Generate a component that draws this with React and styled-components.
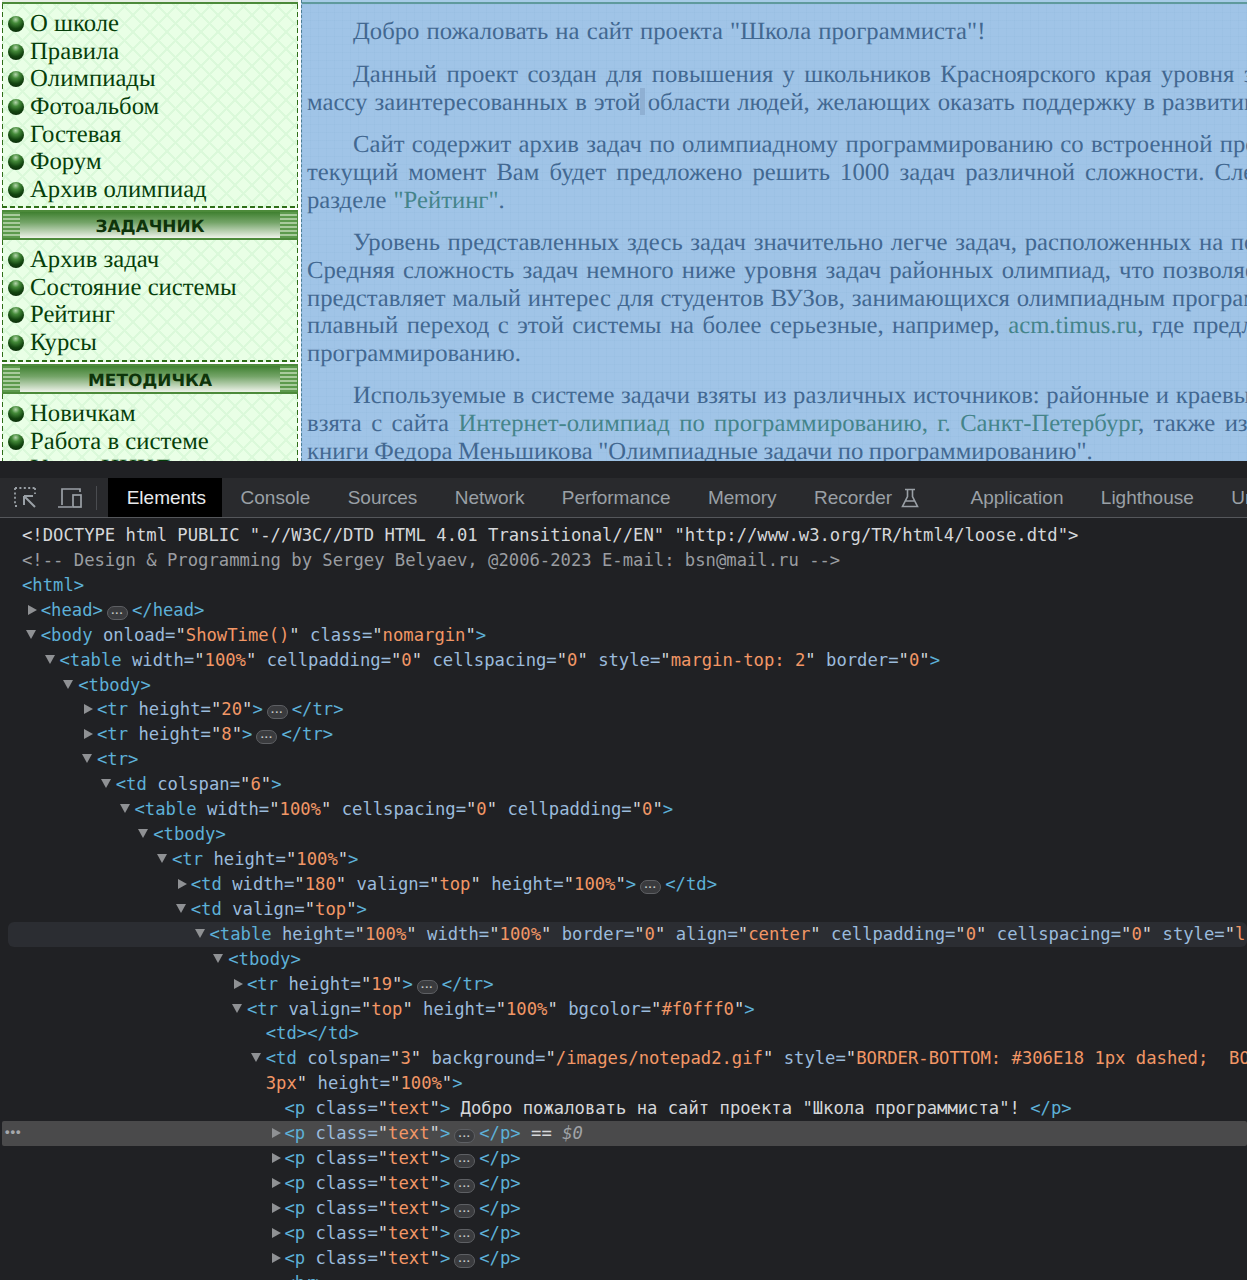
import React from "react";
import styled, { createGlobalStyle } from "styled-components";

const GlobalStyle = createGlobalStyle`
  html, body { margin: 0; padding: 0; background: #202124; overflow: hidden; }
`;

const Page = styled.div`
  width: 1247px;
  height: 1280px;
  overflow: hidden;
  display: flex;
  flex-direction: column;
  background: #202124;
`;

const Site = styled.div`
  height: 461px;
  flex: none;
  display: flex;
  overflow: hidden;
  background: #fff;
  font-family: "Liberation Serif", serif;
  text-rendering: geometricPrecision;
`;

const Sidebar = styled.aside`
  width: 296px;
  margin-left: 2px;
  flex: none;
  display: flex;
  flex-direction: column;
`;

const BannerEnd = styled.div`
  height: 4px;
  flex: none;
  background: linear-gradient(#e8efe6 0 2px, #4c8a3a 2px);
`;

const MenuBox = styled.ul`
  list-style: none;
  margin: 0;
  padding: 6.5px 0 5px 6px;
  height: ${(p) => p.$height}px;
  flex: none;
  box-sizing: border-box;
  background-color: #e9ffe6;
  background-image:
    repeating-linear-gradient(#2f6e18 0 5px, transparent 5px 8px),
    repeating-linear-gradient(#2f6e18 0 5px, transparent 5px 8px),
    repeating-linear-gradient(90deg, #2f6e18 0 5px, transparent 5px 8px),
    repeating-linear-gradient(45deg, #dbf9da 0 2px, transparent 2px 12px),
    repeating-linear-gradient(-45deg, #dbf9da 0 2px, transparent 2px 12px);
  background-size: 1px 100%, 1px 100%, 100% 2px, auto, auto;
  background-position: left top, right top, left bottom, 0 0, 0 0;
  background-repeat: no-repeat, no-repeat, no-repeat, repeat, repeat;
`;

const MenuItem = styled.li`
  display: flex;
  align-items: center;
  gap: 6px;
  height: 27.6px;
  font-size: 24.7px;
  color: #063f0a;
  white-space: nowrap;
`;

const Bullet = styled.span`
  width: 16px;
  height: 16px;
  flex: none;
  border-radius: 50%;
  background: radial-gradient(circle at 48% 22%, #b4d6ac 0, #448a39 26%, #134510 60%, #061f05 100%);
`;

const Banner = styled.div`
  height: 30px;
  margin-top: 2px;
  flex: none;
  box-sizing: border-box;
  border: 1px solid #4c8a3a;
  border-width: 2px 1px;
  display: flex;
  background: linear-gradient(#3f8030, #74a468 40%, #eef3ea 100%);
`;

const BannerStripes = styled.div`
  width: 17px;
  flex: none;
  background: repeating-linear-gradient(#5c9a4c 0 2px, #a8cb9c 2px 4px);
`;

const BannerTitle = styled.div`
  flex: 1;
  text-align: center;
  font: bold 16.9px/29px "DejaVu Sans", sans-serif;
  color: #0e340a;
`;

const Article = styled.main`
  position: relative;
  flex: 1;
  min-width: 0;
  margin-left: 3px;
  overflow: hidden;
  border-left: 1px dashed #4d7f96;
  box-sizing: border-box;
  background-color: #a0c4e7;
  background-image:
    repeating-linear-gradient(90deg, rgba(120, 160, 200, 0.08) 0 1px, transparent 1px 8px),
    repeating-linear-gradient(0deg, rgba(120, 160, 200, 0.08) 0 1px, transparent 1px 8px);
`;

const ArticleTop = styled.div`
  height: 4px;
  margin-bottom: -1px;
  background: linear-gradient(#a6cbe6 0 2px, #5f9a9c 2px);
`;

const CursorMark = styled.span`
  position: absolute;
  left: 338px;
  top: 88px;
  width: 5px;
  height: 27px;
  background: rgba(130, 160, 195, 0.55);
`;

const Paragraph = styled.div`
  margin: 15.2px 0 15.2px 5px;
`;

const TextLine = styled.div`
  font-size: 24.7px;
  line-height: 27.6px;
  color: #426891;
  white-space: pre;
  text-indent: ${(p) => (p.$first ? "46px" : "0")};
  word-spacing: ${(p) => p.$spacing || 0}px;
`;

const SiteLink = styled.span`
  color: #44848a;
`;

const DevTools = styled.section`
  flex: 1;
  min-height: 0;
  padding-top: 17px;
  display: flex;
  flex-direction: column;
`;

const TabBar = styled.nav`
  height: 40px;
  flex: none;
  display: flex;
  align-items: stretch;
  background: #292a2d;
  border-bottom: 1px solid #55575b;
  box-sizing: border-box;
  overflow: hidden;
`;

const ToolIcons = styled.div`
  width: 108px;
  flex: none;
  display: flex;
  align-items: center;
  gap: 19px;
  padding-left: 14px;
  box-sizing: border-box;
  color: #9aa0a6;
`;

const ToolDivider = styled.div`
  width: 1px;
  height: 24px;
  margin-left: -6px;
  background: #4a4c50;
`;

const Tab = styled.div`
  display: flex;
  align-items: center;
  gap: 9px;
  flex: none;
  padding: 0 ${(p) => (p.$active ? "16px" : "18.7px")} 0 18.7px;
  font: 19px "Liberation Sans", sans-serif;
  color: ${(p) => (p.$active ? "#e8eaed" : "#9aa0a6")};
  background: ${(p) => (p.$active ? "#000" : "transparent")};
  svg {
    margin-right: 14px;
  }
`;

const Tree = styled.div`
  flex: 1;
  min-height: 0;
  padding-top: 5px;
  overflow: hidden;
  isolation: isolate;
`;

const Row = styled.div`
  position: relative;
  height: 24.93px;
  padding-left: ${(p) => 22 + p.$level * 18.75}px;
  font: 17.22px/24.93px "DejaVu Sans Mono", monospace;
  white-space: pre;
  color: #d5d7da;
  ${(p) =>
    (p.$selected || p.$hover) &&
    `&::before {
      content: "";
      position: absolute;
      z-index: -1;
      top: 0;
      bottom: 0;
      right: 0;
      left: ${p.$selected ? 2 : 8}px;
      background: ${p.$selected ? "#4a4a4b" : "#2b2d32"};
      border-radius: ${p.$selected ? "2px" : "6px"};
    }`}
`;

const Arrow = styled.span`
  position: absolute;
  top: 7px;
  left: ${(p) => (p.$open ? 7 : 9) + p.$level * 18.75}px;
  width: 0;
  height: 0;
  ${(p) =>
    p.$open
      ? "border-left: 5.5px solid transparent; border-right: 5.5px solid transparent; border-top: 9px solid #8f9194;"
      : "border-top: 5.5px solid transparent; border-bottom: 5.5px solid transparent; border-left: 9px solid #8f9194;"}
`;

const Tag = styled.span`color: #5db0d7;`;
const Attr = styled.span`color: #9bbbdc;`;
const Value = styled.span`color: #f29766;`;
const Comment = styled.span`color: #9a9da1;`;
const Current = styled.span`color: #a0a3a7; font-style: italic;`;

const Dots = styled.span`
  display: inline-block;
  width: 21px;
  height: 14px;
  margin: 0 4px;
  vertical-align: -1px;
  box-sizing: border-box;
  border: 1px solid #5e6064;
  border-radius: 7px;
  background: #3a3b3e;
  color: #c4c7c5;
  font: bold 11px/12px "Liberation Sans", sans-serif;
  letter-spacing: 0.5px;
  text-align: center;
`;

const RowMenu = styled.span`
  position: absolute;
  left: 5px;
  top: 0;
  font: bold 13px/22px "Liberation Sans", sans-serif;
  letter-spacing: 1px;
  color: #a6a8ab;
`;

const menus = {
  main: ["О школе", "Правила", "Олимпиады", "Фотоальбом", "Гостевая", "Форум", "Архив олимпиад"],
  tasks: ["Архив задач", "Состояние системы", "Рейтинг", "Курсы"],
  guide: ["Новичкам", "Работа в системе", "Уроки ЦИКЛ"],
};

function Menu({ items, height }) {
  return (
    <MenuBox $height={height}>
      {items.map((name) => (
        <MenuItem key={name}>
          <Bullet />
          {name}
        </MenuItem>
      ))}
    </MenuBox>
  );
}

function SideBanner({ title }) {
  return (
    <Banner>
      <BannerStripes />
      <BannerTitle>{title}</BannerTitle>
      <BannerStripes />
    </Banner>
  );
}

function A({ n, v }) {
  return (
    <>
      {" "}
      <Attr>{n}</Attr>
      <Attr>=</Attr>"<Value>{v}</Value>"
    </>
  );
}

function Collapsed({ open, close, attrs }) {
  return (
    <>
      <Tag>&lt;{open}</Tag>
      {attrs}
      <Tag>&gt;</Tag>
      <Dots>···</Dots>
      <Tag>&lt;/{close || open}&gt;</Tag>
    </>
  );
}

const TextP = () => (
  <Collapsed open="p" attrs={<A n="class" v="text" />} />
);

function App() {
  return (
    <Page>
      <GlobalStyle />
      <Site>
        <Sidebar>
          <BannerEnd />
          <Menu items={menus.main} height={204} />
          <SideBanner title="ЗАДАЧНИК" />
          <Menu items={menus.tasks} height={122} />
          <SideBanner title="МЕТОДИЧКА" />
          <Menu items={menus.guide} height={120} />
        </Sidebar>
        <Article>
          <ArticleTop />
          <CursorMark />
          <Paragraph>
            <TextLine $first $spacing={1}>Добро пожаловать на сайт проекта "Школа программиста"!</TextLine>
          </Paragraph>
          <Paragraph>
            <TextLine $first $spacing={3.2}>Данный проект создан для повышения у школьников Красноярского края уровня знаний</TextLine>
            <TextLine $spacing={0.9}>массу заинтересованных в этой области людей, желающих оказать поддержку в развитии</TextLine>
          </Paragraph>
          <Paragraph>
            <TextLine $first $spacing={1.1}>Сайт содержит архив задач по олимпиадному программированию со встроенной проверкой</TextLine>
            <TextLine $spacing={3.9}>текущий момент Вам будет предложено решить 1000 задач различной сложности. Следите</TextLine>
            <TextLine $spacing={0.9}>разделе <SiteLink>"Рейтинг"</SiteLink>.</TextLine>
          </Paragraph>
          <Paragraph>
            <TextLine $first $spacing={1.5}>Уровень представленных здесь задач значительно легче задач, расположенных на популярных</TextLine>
            <TextLine $spacing={2}>Средняя сложность задач немного ниже уровня задач районных олимпиад, что позволяет</TextLine>
            <TextLine $spacing={0.6}>представляет малый интерес для студентов ВУЗов, занимающихся олимпиадным программированием</TextLine>
            <TextLine $spacing={2.3}>плавный переход с этой системы на более серьезные, например, <SiteLink>acm.timus.ru</SiteLink>, где предлагается</TextLine>
            <TextLine>программированию.</TextLine>
          </Paragraph>
          <Paragraph>
            <TextLine $first $spacing={0.5}>Используемые в системе задачи взяты из различных источников: районные и краевые</TextLine>
            <TextLine $spacing={3.2}>взята с сайта <SiteLink>Интернет-олимпиад по программированию, г. Санкт-Петербург</SiteLink>, также из</TextLine>
            <TextLine $spacing={-0.7}>книги Федора Меньшикова "Олимпиадные задачи по программированию".</TextLine>
          </Paragraph>
        </Article>
      </Site>
      <DevTools>
        <TabBar>
          <ToolIcons>
            <svg width="24" height="24" viewBox="0 0 24 24" fill="none" stroke="currentColor" strokeWidth="1.8">
              <path d="M1 2h20M1 2v16M1 20h4M21 2v6" strokeDasharray="2 2.4" />
              <path d="M10 10h9M10 10v9M10 10l11 11" strokeWidth="2" />
            </svg>
            <svg width="26" height="22" viewBox="0 0 26 22" fill="none" stroke="currentColor" strokeWidth="1.7">
              <path d="M1 20h14M5 18V2h18v3" />
              <rect x="16" y="8" width="8" height="12" />
            </svg>
            <ToolDivider />
          </ToolIcons>
          <Tab $active>Elements</Tab>
          <Tab>Console</Tab>
          <Tab>Sources</Tab>
          <Tab>Network</Tab>
          <Tab>Performance</Tab>
          <Tab>Memory</Tab>
          <Tab>
            Recorder
            <svg width="18" height="20" viewBox="0 0 18 20" fill="none" stroke="currentColor" strokeWidth="1.6">
              <path d="M4 1.5h10M6.5 1.5v7L1.5 18.5h15L11.5 8.5v-7M4.5 13h9" />
            </svg>
          </Tab>
          <Tab>Application</Tab>
          <Tab>Lighthouse</Tab>
          <Tab>Ur</Tab>
        </TabBar>
        <Tree>
          <Row $level={0}>&lt;!DOCTYPE html PUBLIC "-//W3C//DTD HTML 4.01 Transitional//EN" "http://www.w3.org/TR/html4/loose.dtd"&gt;</Row>
          <Row $level={0}><Comment>&lt;!-- Design &amp; Programming by Sergey Belyaev, @2006-2023 E-mail: bsn@mail.ru --&gt;</Comment></Row>
          <Row $level={0}><Tag>&lt;html&gt;</Tag></Row>
          <Row $level={1}><Arrow $level={1} /><Collapsed open="head" /></Row>
          <Row $level={1}><Arrow $level={1} $open /><Tag>&lt;body</Tag><A n="onload" v="ShowTime()" /><A n="class" v="nomargin" /><Tag>&gt;</Tag></Row>
          <Row $level={2}><Arrow $level={2} $open /><Tag>&lt;table</Tag><A n="width" v="100%" /><A n="cellpadding" v="0" /><A n="cellspacing" v="0" /><A n="style" v="margin-top: 2" /><A n="border" v="0" /><Tag>&gt;</Tag></Row>
          <Row $level={3}><Arrow $level={3} $open /><Tag>&lt;tbody&gt;</Tag></Row>
          <Row $level={4}><Arrow $level={4} /><Collapsed open="tr" attrs={<A n="height" v="20" />} /></Row>
          <Row $level={4}><Arrow $level={4} /><Collapsed open="tr" attrs={<A n="height" v="8" />} /></Row>
          <Row $level={4}><Arrow $level={4} $open /><Tag>&lt;tr&gt;</Tag></Row>
          <Row $level={5}><Arrow $level={5} $open /><Tag>&lt;td</Tag><A n="colspan" v="6" /><Tag>&gt;</Tag></Row>
          <Row $level={6}><Arrow $level={6} $open /><Tag>&lt;table</Tag><A n="width" v="100%" /><A n="cellspacing" v="0" /><A n="cellpadding" v="0" /><Tag>&gt;</Tag></Row>
          <Row $level={7}><Arrow $level={7} $open /><Tag>&lt;tbody&gt;</Tag></Row>
          <Row $level={8}><Arrow $level={8} $open /><Tag>&lt;tr</Tag><A n="height" v="100%" /><Tag>&gt;</Tag></Row>
          <Row $level={9}><Arrow $level={9} /><Collapsed open="td" attrs={<><A n="width" v="180" /><A n="valign" v="top" /><A n="height" v="100%" /></>} /></Row>
          <Row $level={9}><Arrow $level={9} $open /><Tag>&lt;td</Tag><A n="valign" v="top" /><Tag>&gt;</Tag></Row>
          <Row $level={10} $hover><Arrow $level={10} $open /><Tag>&lt;table</Tag><A n="height" v="100%" /><A n="width" v="100%" /><A n="border" v="0" /><A n="align" v="center" /><A n="cellpadding" v="0" /><A n="cellspacing" v="0" /> <Attr>style</Attr><Attr>=</Attr>"<Value>l</Value></Row>
          <Row $level={11}><Arrow $level={11} $open /><Tag>&lt;tbody&gt;</Tag></Row>
          <Row $level={12}><Arrow $level={12} /><Collapsed open="tr" attrs={<A n="height" v="19" />} /></Row>
          <Row $level={12}><Arrow $level={12} $open /><Tag>&lt;tr</Tag><A n="valign" v="top" /><A n="height" v="100%" /><A n="bgcolor" v="#f0fff0" /><Tag>&gt;</Tag></Row>
          <Row $level={13}><Tag>&lt;td&gt;&lt;/td&gt;</Tag></Row>
          <Row $level={13}><Arrow $level={13} $open /><Tag>&lt;td</Tag><A n="colspan" v="3" /><A n="background" v="/images/notepad2.gif" /> <Attr>style</Attr><Attr>=</Attr>"<Value>BORDER-BOTTOM: #306E18 1px dashed;  BO</Value></Row>
          <Row $level={13}><Value>3px</Value>"<A n="height" v="100%" /><Tag>&gt;</Tag></Row>
          <Row $level={14}><Tag>&lt;p</Tag><A n="class" v="text" /><Tag>&gt;</Tag> Добро пожаловать на сайт проекта "Школа программиста"! <Tag>&lt;/p&gt;</Tag></Row>
          <Row $level={14} $selected><RowMenu>•••</RowMenu><Arrow $level={14} /><TextP /> == <Current>$0</Current></Row>
          <Row $level={14}><Arrow $level={14} /><TextP /></Row>
          <Row $level={14}><Arrow $level={14} /><TextP /></Row>
          <Row $level={14}><Arrow $level={14} /><TextP /></Row>
          <Row $level={14}><Arrow $level={14} /><TextP /></Row>
          <Row $level={14}><Arrow $level={14} /><TextP /></Row>
          <Row $level={14}><Tag>&lt;hr&gt;</Tag></Row>
        </Tree>
      </DevTools>
    </Page>
  );
}

export default App;
